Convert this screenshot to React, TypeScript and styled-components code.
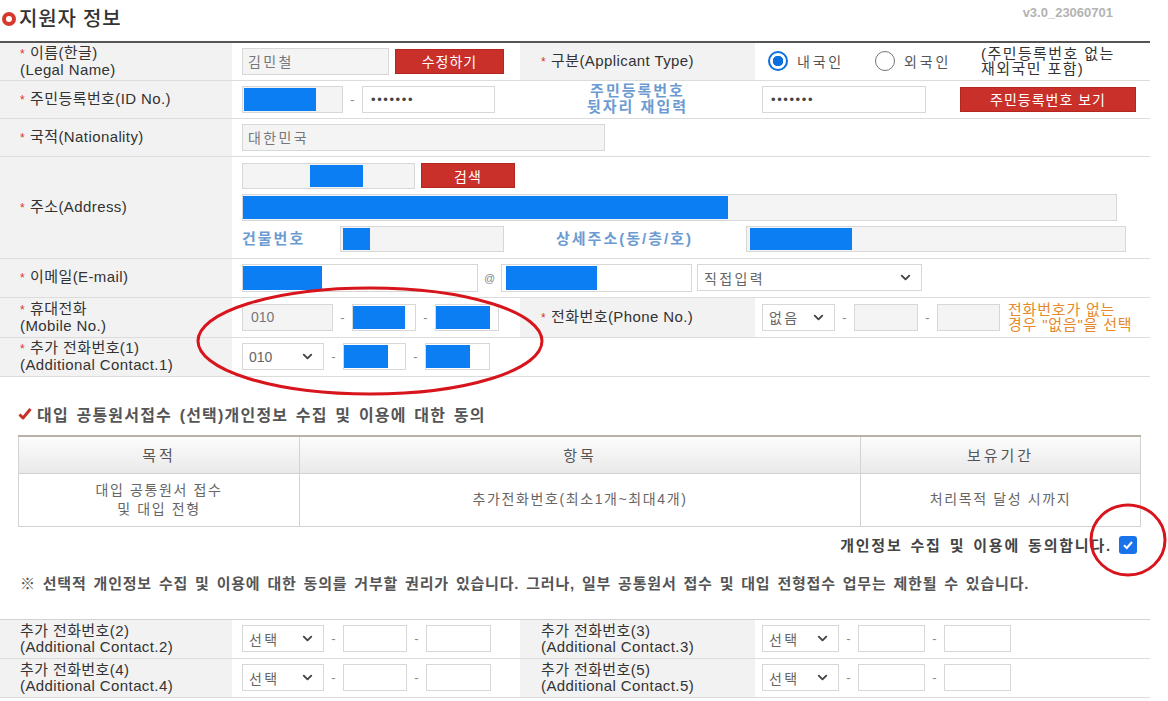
import React from "react";
import styled, { createGlobalStyle } from "styled-components";
import { ChevronDown } from "lucide-react";

const GlobalStyle = createGlobalStyle`
  html, body {
    margin: 0;
    padding: 0;
    background: #fff;
  }
  body {
    font-family: "Liberation Sans", "Noto Sans CJK KR", sans-serif;
    color: #333;
  }
`;

const Page = styled.div`
  position: relative;
  width: 1168px;
  height: 701px;
  overflow: hidden;
`;

const Header = styled.div`
  width: 1150px;
  height: 41px;
  box-sizing: border-box;
  padding: 6px 37px 0 2px;
  display: flex;
  justify-content: space-between;
  align-items: flex-start;
`;

const Title = styled.h2`
  margin: 0;
  display: flex;
  align-items: center;
  gap: 3px;
  font-size: 20px;
  line-height: 26px;
  font-weight: 500;
  letter-spacing: 0.8px;
  color: #333;
`;

const Ring = styled.span`
  width: 14px;
  height: 14px;
  box-sizing: border-box;
  border: 4px solid #d6382c;
  border-radius: 50%;
`;

const Version = styled.span`
  margin-top: 0;
  font-size: 13px;
  line-height: 14px;
  font-weight: bold;
  color: #b3b3b3;
`;

const FormTable = styled.table<{ $top?: string }>`
  width: 1150px;
  border-collapse: collapse;
  table-layout: fixed;
  border-top: ${(p) => p.$top ?? "2px solid #555"};
  font-size: 15px;
`;

const Row = styled.tr<{ $h: number }>`
  height: ${(p) => p.$h}px;
  border-bottom: 1px solid #dcdcdc;
`;

const Label = styled.td<{ $pad?: number }>`
  background: #f2f2f2;
  padding: 0 0 0 ${(p) => p.$pad ?? 20}px;
  line-height: 16px;
  color: #333;
  letter-spacing: 0.4px;
  vertical-align: middle;
`;

const Value = styled.td<{ $pad?: number }>`
  padding: 0 0 0 ${(p) => p.$pad ?? 10}px;
  vertical-align: middle;
`;

const CenterCell = styled.td`
  text-align: center;
  vertical-align: middle;
  padding: 0;
`;

const Star = styled.span`
  color: #d9362b;
  font-size: 12px;
  margin-right: 5px;
`;

const Inline = styled.div<{ $gap?: number }>`
  display: flex;
  align-items: center;
  gap: ${(p) => p.$gap ?? 0}px;
`;

const Stack = styled.div`
  display: flex;
  flex-direction: column;
  gap: 5px;
`;

const Field = styled.div<{ $w: number; $gray?: boolean; $pad?: number; $h?: number }>`
  width: ${(p) => p.$w}px;
  height: ${(p) => p.$h ?? 27}px;
  box-sizing: border-box;
  border: 1px solid #d7d7d7;
  background: ${(p) => (p.$gray ? "#f4f4f4" : "#fff")};
  display: flex;
  align-items: center;
  padding: 0 0 0 ${(p) => p.$pad ?? 6}px;
  font-size: 14px;
  color: #777;
  flex-shrink: 0;
`;

const Ko = styled.span`
  letter-spacing: 2.4px;
`;

const Redact = styled.span<{ $w: number; $x?: number }>`
  align-self: stretch;
  width: ${(p) => p.$w}px;
  margin: 1px 0 1px ${(p) => p.$x ?? 0}px;
  background: #0a7ef2;
`;

const Dots = styled.span`
  font-size: 13px;
  letter-spacing: 1.6px;
  color: #444;
`;

const DashMark = styled.span<{ $w?: number }>`
  width: ${(p) => p.$w ?? 19}px;
  text-align: center;
  font-size: 13px;
  color: #888;
  flex-shrink: 0;
`;

const Dash = ({ w }: { w?: number }) => <DashMark $w={w}>-</DashMark>;

const SelectBox = styled.div<{ $w: number }>`
  width: ${(p) => p.$w}px;
  height: 27px;
  box-sizing: border-box;
  border: 1px solid #d7d7d7;
  background: #fff;
  display: flex;
  align-items: center;
  justify-content: space-between;
  padding: 0 8px 0 6px;
  font-size: 14px;
  color: #666;
  flex-shrink: 0;
`;

const RedButton = styled.button<{ $w: number }>`
  width: ${(p) => p.$w}px;
  height: 25px;
  padding: 0;
  background: #c9302a;
  border: 1px solid #b4271f;
  color: #fff;
  font-family: inherit;
  font-size: 14px;
  letter-spacing: 1px;
  flex-shrink: 0;
`;

const BlueText = styled.span<{ $w?: number; $pad?: number }>`
  display: inline-block;
  box-sizing: border-box;
  width: ${(p) => (p.$w ? `${p.$w}px` : "auto")};
  padding-left: ${(p) => p.$pad ?? 0}px;
  color: #6c9bd2;
  font-weight: bold;
  font-size: 15px;
  line-height: 16px;
  letter-spacing: 2px;
  flex-shrink: 0;
`;

const Radio = styled.span<{ $on?: boolean }>`
  width: 20px;
  height: 20px;
  box-sizing: border-box;
  border-radius: 50%;
  border: ${(p) => (p.$on ? "2px solid #0b6fde" : "1px solid #767676")};
  background: ${(p) =>
    p.$on ? "radial-gradient(circle, #0b6fde 0 5px, #fff 5.5px)" : "#fff"};
  flex-shrink: 0;
`;

const RadioText = styled.span`
  font-size: 14px;
  color: #555;
  letter-spacing: 2.8px;
`;

const Note = styled.span<{ $color?: string }>`
  font-size: 15px;
  line-height: 15px;
  letter-spacing: 1.4px;
  color: ${(p) => p.$color ?? "#333"};
`;

const Section = styled.div`
  width: 1140px;
  box-sizing: border-box;
  padding-left: 18px;
`;

const SectionTitle = styled.h3`
  margin: 27px 0 11px 0;
  height: 20px;
  display: flex;
  align-items: center;
  gap: 5px;
  font-size: 16px;
  font-weight: bold;
  color: #555;
  letter-spacing: 1.2px;
  word-spacing: 2px;
`;

const ConsentTable = styled.table`
  width: 1122px;
  border-collapse: collapse;
  table-layout: fixed;
  border-top: 2px solid #b8b2a8;
  font-size: 14px;
  color: #555;
  letter-spacing: 1.6px;
`;

const Th = styled.th`
  height: 36px;
  padding: 0;
  font-size: 15px;
  font-weight: normal;
  letter-spacing: 3px;
  background: linear-gradient(#fcfcfc, #e9e9e9);
  border: 1px solid #d3d3d3;
  border-top: none;
`;

const Td = styled.td`
  height: 52px;
  padding: 0;
  text-align: center;
  line-height: 19px;
  color: #666;
  border: 1px solid #d3d3d3;
`;

const AgreeLine = styled.div`
  margin-top: 8px;
  height: 20px;
  padding-right: 3px;
  display: flex;
  justify-content: flex-end;
  align-items: center;
  gap: 7px;
  font-size: 15px;
  font-weight: bold;
  color: #444;
  letter-spacing: 1.8px;
  word-spacing: 2px;
`;

const CheckBox = styled.span`
  width: 18px;
  height: 18px;
  border-radius: 3px;
  background: #1a73e8;
  display: flex;
  align-items: center;
  justify-content: center;
`;

const Notice = styled.p`
  margin: 19px 0 25px 2px;
  height: 20px;
  line-height: 20px;
  font-size: 15px;
  font-weight: bold;
  color: #555;
  white-space: nowrap;
  letter-spacing: 0.8px;
  word-spacing: 2px;
`;

const Overlay = styled.svg`
  position: absolute;
  left: 0;
  top: 0;
  pointer-events: none;
`;

const Chevron = () => <ChevronDown size={15} strokeWidth={3} color="#444" />;

const Select = ({ w, text, ko }: { w: number; text: string; ko?: boolean }) => (
  <SelectBox $w={w}>
    {ko ? <Ko>{text}</Ko> : <span>{text}</span>}
    <Chevron />
  </SelectBox>
);

const TwoLine = ({ star, a, b }: { star?: boolean; a: string; b: string }) => (
  <>
    {star && <Star>*</Star>}
    {a}
    <br />
    {b}
  </>
);

const EmptyPhone = ({ sel, w1, w2, w3, gray }: { sel: string; w1: number; w2: number; w3: number; gray?: boolean }) => (
  <Inline>
    <Select w={w1} text={sel} ko />
    <Dash />
    <Field $w={w2} $gray={gray} />
    <Dash />
    <Field $w={w3} $gray={gray} />
  </Inline>
);

export default function App() {
  return (
    <Page>
      <GlobalStyle />
      <Header>
        <Title>
          <Ring />
          지원자 정보
        </Title>
        <Version>v3.0_23060701</Version>
      </Header>

      <FormTable>
        <colgroup>
          <col style={{ width: 232 }} />
          <col style={{ width: 288 }} />
          <col style={{ width: 235 }} />
          <col style={{ width: 395 }} />
        </colgroup>
        <tbody>
          <Row $h={38}>
            <Label>
              <TwoLine star a="이름(한글)" b="(Legal Name)" />
            </Label>
            <Value>
              <Inline $gap={6}>
                <Field $w={147} $gray $pad={5}>
                  <Ko>김민철</Ko>
                </Field>
                <RedButton $w={109}>수정하기</RedButton>
              </Inline>
            </Value>
            <Label $pad={21}>
              <Star>*</Star>구분(Applicant Type)
            </Label>
            <Value $pad={13}>
              <Inline>
                <Radio $on />
                <RadioText style={{ marginLeft: 9 }}>내국인</RadioText>
                <Radio style={{ marginLeft: 31 }} />
                <RadioText style={{ marginLeft: 9 }}>외국인</RadioText>
                <Note style={{ marginLeft: 30 }}>
                  (주민등록번호 없는
                  <br />
                  재외국민 포함)
                </Note>
              </Inline>
            </Value>
          </Row>

          <Row $h={38}>
            <Label>
              <Star>*</Star>주민등록번호(ID No.)
            </Label>
            <Value>
              <Inline>
                <Field $w={101} $gray $pad={0}>
                  <Redact $w={72} $x={1} />
                </Field>
                <Dash />
                <Field $w={133} $pad={8}>
                  <Dots>•••••••</Dots>
                </Field>
              </Inline>
            </Value>
            <CenterCell>
              <BlueText>
                주민등록번호
                <br />
                뒷자리 재입력
              </BlueText>
            </CenterCell>
            <Value $pad={7}>
              <Inline $gap={34}>
                <Field $w={164} $pad={8}>
                  <Dots>•••••••</Dots>
                </Field>
                <RedButton $w={176}>주민등록번호 보기</RedButton>
              </Inline>
            </Value>
          </Row>

          <Row $h={38}>
            <Label>
              <Star>*</Star>국적(Nationality)
            </Label>
            <Value colSpan={3}>
              <Field $w={363} $gray $pad={5}>
                <Ko>대한민국</Ko>
              </Field>
            </Value>
          </Row>

          <Row $h={102}>
            <Label>
              <Star>*</Star>주소(Address)
            </Label>
            <Value colSpan={3}>
              <Stack>
                <Inline $gap={6}>
                  <Field $w={173} $h={26} $gray $pad={0}>
                    <Redact $w={53} $x={67} />
                  </Field>
                  <RedButton $w={94}>검색</RedButton>
                </Inline>
                <Field $w={875} $gray $pad={0}>
                  <Redact $w={485} $x={0} />
                </Field>
                <Inline>
                  <BlueText $w={98}>건물번호</BlueText>
                  <Field $w={164} $h={26} $gray $pad={0}>
                    <Redact $w={27} $x={2} />
                  </Field>
                  <BlueText $w={242} $pad={52}>
                    상세주소(동/층/호)
                  </BlueText>
                  <Field $w={380} $h={26} $gray $pad={0}>
                    <Redact $w={102} $x={3} />
                  </Field>
                </Inline>
              </Stack>
            </Value>
          </Row>

          <Row $h={39}>
            <Label>
              <Star>*</Star>이메일(E-mail)
            </Label>
            <Value colSpan={3}>
              <Inline>
                <Field $w={236} $pad={0} $h={28}>
                  <Redact $w={79} $x={0} />
                </Field>
                <DashMark $w={23} style={{ fontSize: 11 }}>@</DashMark>
                <Field $w={191} $pad={0} $h={28}>
                  <Redact $w={91} $x={4} />
                </Field>
                <span style={{ width: 5 }} />
                <Select w={225} text="직접입력" ko />
              </Inline>
            </Value>
          </Row>

          <Row $h={40}>
            <Label>
              <TwoLine star a="휴대전화" b="(Mobile No.)" />
            </Label>
            <Value>
              <Inline>
                <Field $w={91} $gray $pad={8}>010</Field>
                <Dash />
                <Field $w={64} $pad={0}>
                  <Redact $w={52} $x={0} />
                </Field>
                <Dash />
                <Field $w={64} $pad={0}>
                  <Redact $w={54} $x={0} />
                </Field>
              </Inline>
            </Value>
            <Label $pad={21}>
              <Star>*</Star>전화번호(Phone No.)
            </Label>
            <Value $pad={7}>
              <Inline>
                <EmptyPhone sel="없음" w1={73} w2={64} w3={63} gray />
                <Note $color="#e5892c" style={{ marginLeft: 8, letterSpacing: 0.8 }}>
                  전화번호가 없는
                  <br />
                  경우 "없음"을 선택
                </Note>
              </Inline>
            </Value>
          </Row>

          <Row $h={39}>
            <Label>
              <TwoLine star a="추가 전화번호(1)" b="(Additional Contact.1)" />
            </Label>
            <Value colSpan={3}>
              <Inline>
                <Select w={82} text="010" />
                <Dash />
                <Field $w={63} $pad={0}>
                  <Redact $w={44} $x={0} />
                </Field>
                <Dash />
                <Field $w={65} $pad={0}>
                  <Redact $w={44} $x={0} />
                </Field>
              </Inline>
            </Value>
          </Row>
        </tbody>
      </FormTable>

      <Section>
        <SectionTitle>
          <svg width="14" height="14" viewBox="0 0 14 14">
            <path d="M1.5 7.5 L5 11 L12.5 2" fill="none" stroke="#c8302a" strokeWidth="3" strokeLinejoin="round" />
          </svg>
          대입 공통원서접수 (선택)개인정보 수집 및 이용에 대한 동의
        </SectionTitle>
        <ConsentTable>
          <colgroup>
            <col style={{ width: 281 }} />
            <col style={{ width: 561 }} />
            <col style={{ width: 280 }} />
          </colgroup>
          <thead>
            <tr>
              <Th>목적</Th>
              <Th>항목</Th>
              <Th>보유기간</Th>
            </tr>
          </thead>
          <tbody>
            <tr>
              <Td>
                대입 공통원서 접수
                <br />및 대입 전형
              </Td>
              <Td>추가전화번호(최소1개~최대4개)</Td>
              <Td>처리목적 달성 시까지</Td>
            </tr>
          </tbody>
        </ConsentTable>
        <AgreeLine>
          개인정보 수집 및 이용에 동의합니다.
          <CheckBox>
            <svg width="12" height="12" viewBox="0 0 12 12">
              <path d="M2 6.3 L4.8 9 L10 3" fill="none" stroke="#fff" strokeWidth="2" />
            </svg>
          </CheckBox>
        </AgreeLine>
        <Notice>
          ※ 선택적 개인정보 수집 및 이용에 대한 동의를 거부할 권리가 있습니다. 그러나, 일부 공통원서 접수 및 대입 전형접수 업무는 제한될 수 있습니다.
        </Notice>
      </Section>

      <FormTable $top="1px solid #d3d3d3">
        <colgroup>
          <col style={{ width: 232 }} />
          <col style={{ width: 288 }} />
          <col style={{ width: 235 }} />
          <col style={{ width: 395 }} />
        </colgroup>
        <tbody>
          <Row $h={39}>
            <Label>
              <TwoLine a="추가 전화번호(2)" b="(Additional Contact.2)" />
            </Label>
            <Value>
              <EmptyPhone sel="선택" w1={82} w2={64} w3={65} />
            </Value>
            <Label $pad={21}>
              <TwoLine a="추가 전화번호(3)" b="(Additional Contact.3)" />
            </Label>
            <Value $pad={7}>
              <EmptyPhone sel="선택" w1={77} w2={67} w3={67} />
            </Value>
          </Row>
          <Row $h={39}>
            <Label>
              <TwoLine a="추가 전화번호(4)" b="(Additional Contact.4)" />
            </Label>
            <Value>
              <EmptyPhone sel="선택" w1={82} w2={64} w3={65} />
            </Value>
            <Label $pad={21}>
              <TwoLine a="추가 전화번호(5)" b="(Additional Contact.5)" />
            </Label>
            <Value $pad={7}>
              <EmptyPhone sel="선택" w1={77} w2={67} w3={67} />
            </Value>
          </Row>
        </tbody>
      </FormTable>

      <Overlay width="1168" height="701">
        <ellipse cx="370" cy="341" rx="172" ry="53" fill="none" stroke="#d8141c" strokeWidth="3" />
        <ellipse cx="1128" cy="540" rx="37" ry="35" fill="none" stroke="#d8141c" strokeWidth="3" />
      </Overlay>
    </Page>
  );
}
